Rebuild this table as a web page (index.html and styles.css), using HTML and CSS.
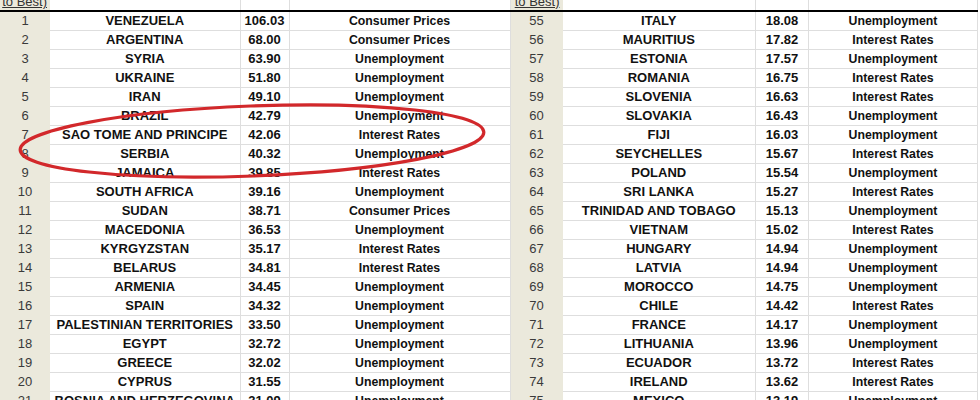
FILE: index.html
```html
<!DOCTYPE html>
<html>
<head>
<meta charset="utf-8">
<link rel="stylesheet" href="styles.css">
</head>
<body>
<div class="page">
  <div class="panels">
    <table class="sheet sheet-left">
      <colgroup><col class="c-idx"><col class="c-country"><col class="c-val"><col class="c-cat"></colgroup>
      <tr class="head"><td class="idx"><div class="clip"><span class="lbl">to Best)</span></div></td><td></td><td></td><td></td></tr>
      <tr><td class="idx">1</td><td>VENEZUELA</td><td>106.03</td><td class="cat">Consumer Prices</td></tr>
      <tr><td class="idx">2</td><td>ARGENTINA</td><td>68.00</td><td class="cat">Consumer Prices</td></tr>
      <tr><td class="idx">3</td><td>SYRIA</td><td>63.90</td><td class="cat">Unemployment</td></tr>
      <tr><td class="idx">4</td><td>UKRAINE</td><td>51.80</td><td class="cat">Unemployment</td></tr>
      <tr><td class="idx">5</td><td>IRAN</td><td>49.10</td><td class="cat">Unemployment</td></tr>
      <tr><td class="idx">6</td><td>BRAZIL</td><td>42.79</td><td class="cat">Unemployment</td></tr>
      <tr><td class="idx">7</td><td>SAO TOME AND PRINCIPE</td><td>42.06</td><td class="cat">Interest Rates</td></tr>
      <tr><td class="idx">8</td><td>SERBIA</td><td>40.32</td><td class="cat">Unemployment</td></tr>
      <tr><td class="idx">9</td><td>JAMAICA</td><td>39.85</td><td class="cat">Interest Rates</td></tr>
      <tr><td class="idx">10</td><td>SOUTH AFRICA</td><td>39.16</td><td class="cat">Unemployment</td></tr>
      <tr><td class="idx">11</td><td>SUDAN</td><td>38.71</td><td class="cat">Consumer Prices</td></tr>
      <tr><td class="idx">12</td><td>MACEDONIA</td><td>36.53</td><td class="cat">Unemployment</td></tr>
      <tr><td class="idx">13</td><td>KYRGYZSTAN</td><td>35.17</td><td class="cat">Interest Rates</td></tr>
      <tr><td class="idx">14</td><td>BELARUS</td><td>34.81</td><td class="cat">Interest Rates</td></tr>
      <tr><td class="idx">15</td><td>ARMENIA</td><td>34.45</td><td class="cat">Unemployment</td></tr>
      <tr><td class="idx">16</td><td>SPAIN</td><td>34.32</td><td class="cat">Unemployment</td></tr>
      <tr><td class="idx">17</td><td>PALESTINIAN TERRITORIES</td><td>33.50</td><td class="cat">Unemployment</td></tr>
      <tr><td class="idx">18</td><td>EGYPT</td><td>32.72</td><td class="cat">Unemployment</td></tr>
      <tr><td class="idx">19</td><td>GREECE</td><td>32.02</td><td class="cat">Unemployment</td></tr>
      <tr><td class="idx">20</td><td>CYPRUS</td><td>31.55</td><td class="cat">Unemployment</td></tr>
      <tr><td class="idx">21</td><td>BOSNIA AND HERZEGOVINA</td><td>31.09</td><td class="cat">Unemployment</td></tr>
    </table>
    <table class="sheet sheet-right">
      <colgroup><col class="c-idx2"><col class="c-country2"><col class="c-val2"><col class="c-cat2"></colgroup>
      <tr class="head"><td class="idx"><div class="clip"><span class="lbl">to Best)</span></div></td><td></td><td></td><td></td></tr>
      <tr><td class="idx">55</td><td>ITALY</td><td>18.08</td><td class="cat">Unemployment</td></tr>
      <tr><td class="idx">56</td><td>MAURITIUS</td><td>17.82</td><td class="cat">Interest Rates</td></tr>
      <tr><td class="idx">57</td><td>ESTONIA</td><td>17.57</td><td class="cat">Unemployment</td></tr>
      <tr><td class="idx">58</td><td>ROMANIA</td><td>16.75</td><td class="cat">Interest Rates</td></tr>
      <tr><td class="idx">59</td><td>SLOVENIA</td><td>16.63</td><td class="cat">Interest Rates</td></tr>
      <tr><td class="idx">60</td><td>SLOVAKIA</td><td>16.43</td><td class="cat">Unemployment</td></tr>
      <tr><td class="idx">61</td><td>FIJI</td><td>16.03</td><td class="cat">Unemployment</td></tr>
      <tr><td class="idx">62</td><td>SEYCHELLES</td><td>15.67</td><td class="cat">Interest Rates</td></tr>
      <tr><td class="idx">63</td><td>POLAND</td><td>15.54</td><td class="cat">Unemployment</td></tr>
      <tr><td class="idx">64</td><td>SRI LANKA</td><td>15.27</td><td class="cat">Interest Rates</td></tr>
      <tr><td class="idx">65</td><td>TRINIDAD AND TOBAGO</td><td>15.13</td><td class="cat">Unemployment</td></tr>
      <tr><td class="idx">66</td><td>VIETNAM</td><td>15.02</td><td class="cat">Interest Rates</td></tr>
      <tr><td class="idx">67</td><td>HUNGARY</td><td>14.94</td><td class="cat">Unemployment</td></tr>
      <tr><td class="idx">68</td><td>LATVIA</td><td>14.94</td><td class="cat">Unemployment</td></tr>
      <tr><td class="idx">69</td><td>MOROCCO</td><td>14.75</td><td class="cat">Unemployment</td></tr>
      <tr><td class="idx">70</td><td>CHILE</td><td>14.42</td><td class="cat">Interest Rates</td></tr>
      <tr><td class="idx">71</td><td>FRANCE</td><td>14.17</td><td class="cat">Unemployment</td></tr>
      <tr><td class="idx">72</td><td>LITHUANIA</td><td>13.96</td><td class="cat">Unemployment</td></tr>
      <tr><td class="idx">73</td><td>ECUADOR</td><td>13.72</td><td class="cat">Interest Rates</td></tr>
      <tr><td class="idx">74</td><td>IRELAND</td><td>13.62</td><td class="cat">Interest Rates</td></tr>
      <tr><td class="idx">75</td><td>MEXICO</td><td>13.19</td><td class="cat">Unemployment</td></tr>
    </table>
  </div>
  <svg class="circle" width="520" height="110" viewBox="0 0 520 110">
    <ellipse cx="252" cy="45" rx="232" ry="35" transform="rotate(-2.2 252 45)" fill="none" stroke="#d2282b" stroke-width="3.2"/>
  </svg>
</div>
</body>
</html>
```

FILE: styles.css
```css
html, body {
  margin: 0;
  padding: 0;
  background: #ffffff;
}
.page {
  position: relative;
  width: 980px;
  height: 400px;
  overflow: hidden;
  font-family: "Liberation Sans", Arial, sans-serif;
}
.panels {
  display: flex;
  align-items: flex-start;
}
.sheet {
  border-collapse: collapse;
  table-layout: fixed;
  flex: none;
}
.sheet-left { width: 510px; }
.sheet-right { width: 467px; }
.c-idx { width: 50px; }
.c-country { width: 190px; }
.c-val { width: 49px; }
.c-cat { width: 221px; }
.c-idx2 { width: 52px; }
.c-country2 { width: 193px; }
.c-val2 { width: 53px; }
.c-cat2 { width: 169px; }

.sheet td {
  height: 18px;
  padding: 0;
  border-bottom: 1px solid #dedede;
  border-right: 1px solid #dedede;
  text-align: center;
  vertical-align: middle;
  white-space: nowrap;
  overflow: hidden;
  font-size: 13px;
  font-weight: bold;
  color: #111111;
  line-height: 18px;
}
.sheet td.cat {
  font-size: 12.3px;
}
.sheet td.idx {
  background: #ebe9dc;
  font-weight: normal;
  color: #3a3a3a;
  border-bottom: 1px solid #ebe9dc;
  border-right: none;
}
.sheet tr.head td {
  height: 10px;
  line-height: 10px;
  border-bottom: 2px solid #000000;
  vertical-align: bottom;
}
.clip {
  height: 10px;
  overflow: hidden;
  text-align: right;
  padding-right: 3px;
}
.lbl {
  display: block;
  margin-top: -5px;
  line-height: 14px;
  font-size: 13px;
  font-weight: normal;
  color: #333333;
  text-decoration: underline;
}
.circle {
  position: absolute;
  left: 0;
  top: 96px;
}
```
